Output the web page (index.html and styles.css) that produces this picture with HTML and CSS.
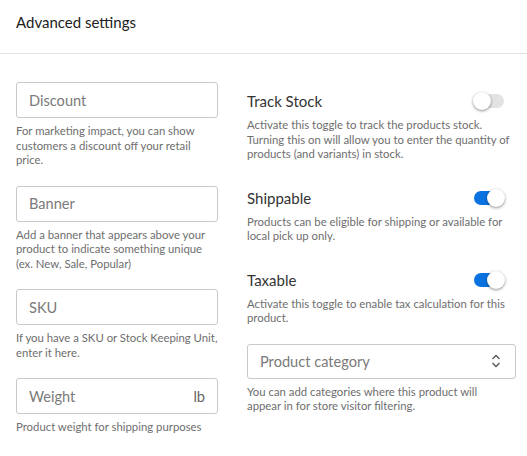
FILE: index.html
```html
<!DOCTYPE html>
<html>
<head>
<meta charset="utf-8">
<link rel="stylesheet" href="styles.css">
</head>
<body>
<div class="panel">
  <div class="panel-header">Advanced settings</div>
  <div class="panel-body">
    <div class="col col-left">
      <div class="field">
        <div class="input"><span class="placeholder">Discount</span></div>
        <p class="help">For marketing impact, you can show customers a discount off your retail price.</p>
      </div>
      <div class="field">
        <div class="input"><span class="placeholder">Banner</span></div>
        <p class="help">Add a banner that appears above your product to indicate something unique (ex. New, Sale, Popular)</p>
      </div>
      <div class="field">
        <div class="input"><span class="placeholder">SKU</span></div>
        <p class="help">If you have a SKU or Stock Keeping Unit, enter it here.</p>
      </div>
      <div class="field">
        <div class="input"><span class="placeholder">Weight</span><span class="unit">lb</span></div>
        <p class="help">Product weight for shipping purposes</p>
      </div>
    </div>
    <div class="col col-right">
      <div class="setting">
        <div class="setting-row">
          <span class="setting-title">Track Stock</span>
          <span class="toggle"><span class="knob"></span></span>
        </div>
        <p class="help">Activate this toggle to track the products stock. Turning this on will allow you to enter the quantity of products (and variants) in stock.</p>
      </div>
      <div class="setting">
        <div class="setting-row">
          <span class="setting-title">Shippable</span>
          <span class="toggle on"><span class="knob"></span></span>
        </div>
        <p class="help">Products can be eligible for shipping or available for local pick up only.</p>
      </div>
      <div class="setting">
        <div class="setting-row">
          <span class="setting-title">Taxable</span>
          <span class="toggle on"><span class="knob"></span></span>
        </div>
        <p class="help">Activate this toggle to enable tax calculation for this product.</p>
      </div>
      <div class="field select-field">
        <div class="input select"><span class="placeholder">Product category</span>
          <svg class="chevrons" width="10" height="16" viewBox="0 0 10 16"><path d="M1.5 6 L5 2.5 L8.5 6" fill="none" stroke="#555" stroke-width="1.3"/><path d="M1.5 10 L5 13.5 L8.5 10" fill="none" stroke="#555" stroke-width="1.3"/></svg>
        </div>
        <p class="help help-narrow">You can add categories where this product will appear in for store visitor filtering.</p>
      </div>
    </div>
  </div>
</div>
</body>
</html>
```

FILE: styles.css
```css
* { box-sizing: border-box; }
body {
  margin: 0;
  background: #fff;
  font-family: Lato, "Open Sans", sans-serif;
  color: #333;
}
.panel-header {
  height: 54px;
  padding: 12px 16px 0;
  font-size: 15px;
  line-height: 20px;
  color: #212121;
  border-bottom: 1px solid #e1e1e1;
}
.panel-body {
  display: grid;
  grid-template-columns: 202px 269px;
  column-gap: 29px;
  padding: 28px 11px 0 16px;
}
.field { margin-bottom: 18px; }
.input {
  height: 36px;
  border: 1px solid #c9c9c9;
  border-radius: 3px;
  display: flex;
  align-items: center;
  justify-content: space-between;
  padding: 0 12px;
  font-size: 14.6px;
}
.placeholder { color: #7a7a7a; }
.unit { color: #666; }
.help {
  margin: 6px 0 0;
  font-size: 11.35px;
  line-height: 14.5px;
  color: #6e6e6e;
}
.help-narrow { padding-right: 24px; }
.col-right { padding-top: 9px; }
.setting { margin-bottom: 26px; }
.setting:nth-child(3) { margin-bottom: 18px; }
.setting-row {
  height: 20px;
  display: flex;
  align-items: center;
  justify-content: space-between;
  padding-right: 12px;
}
.setting-title { font-size: 15px; color: #333; }
.setting-row + .help { margin-top: 7px; }
.toggle {
  position: relative;
  width: 30px;
  height: 14px;
  border-radius: 7px;
  background: #e3e3e3;
}
.toggle .knob {
  position: absolute;
  top: -2px;
  left: -1px;
  width: 18px;
  height: 18px;
  border-radius: 50%;
  background: #fff;
  box-shadow: 0 1px 3px rgba(0,0,0,0.45);
}
.toggle.on { background: #0a72e0; }
.toggle.on .knob { left: auto; right: -1px; }
.select { height: 35px; padding-right: 14px; }
.chevrons { display: block; }
```
